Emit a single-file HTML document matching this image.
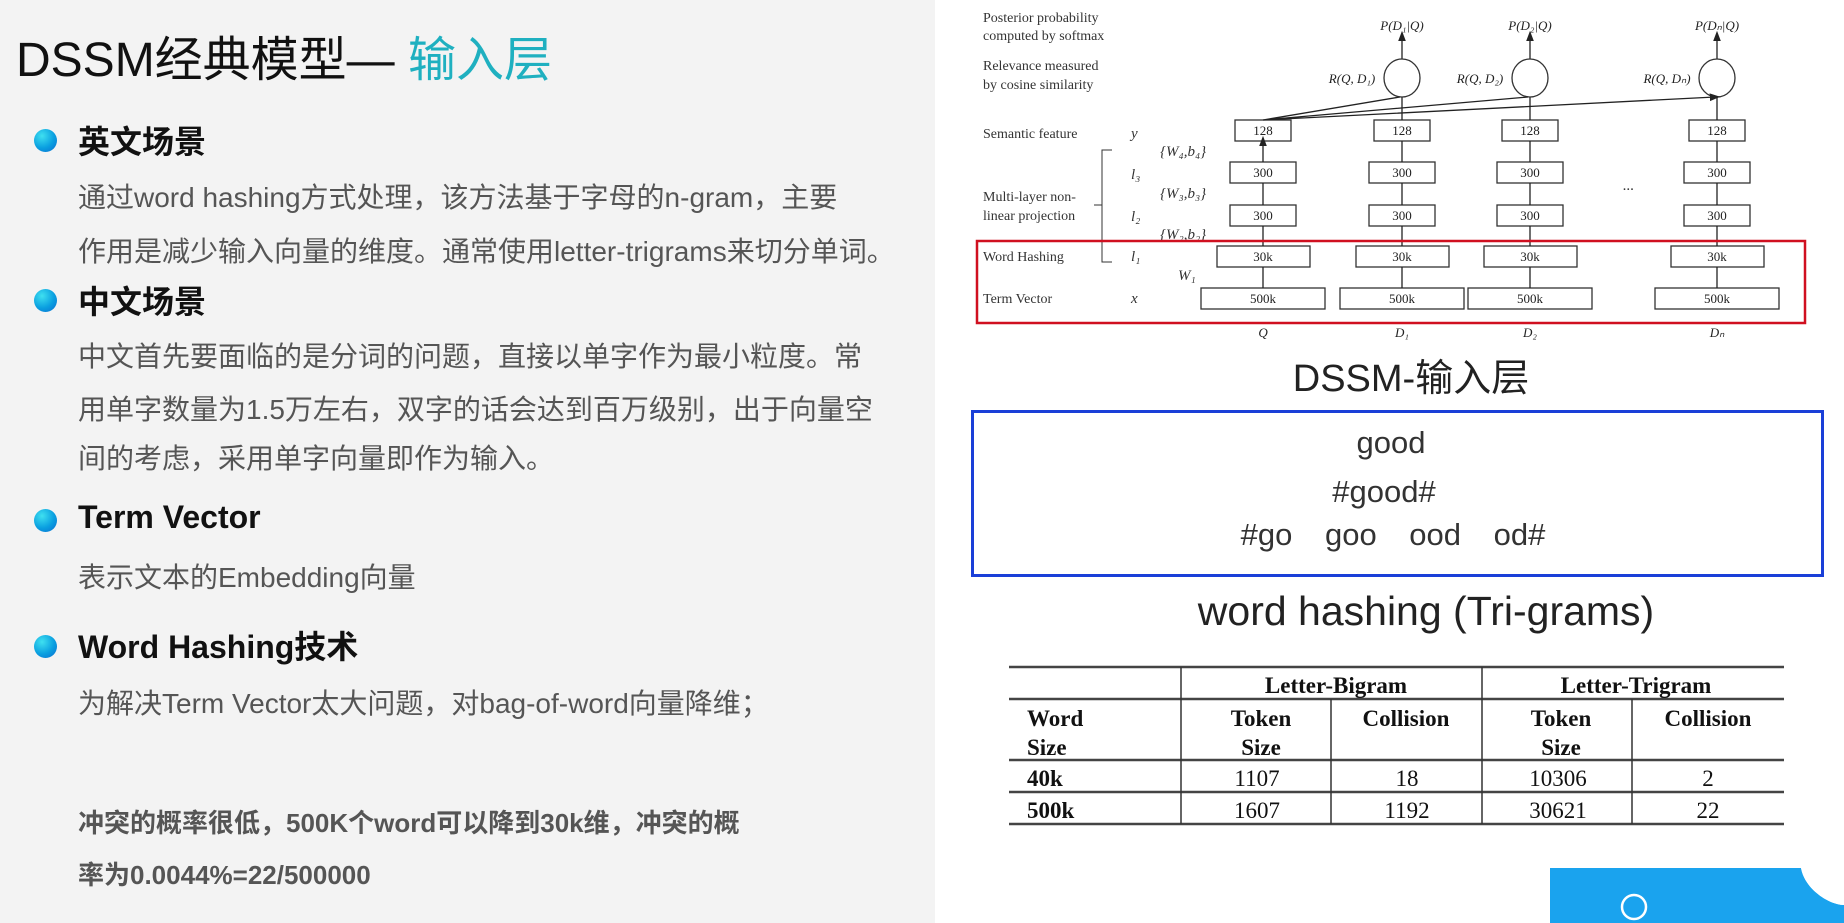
<!DOCTYPE html>
<html><head><meta charset="utf-8"><style>
*{margin:0;padding:0;box-sizing:border-box}
body{width:1844px;height:923px;background:#fff;position:relative;overflow:hidden;font-family:"Liberation Sans","Noto Sans CJK SC",sans-serif}
#left{position:absolute;left:0;top:0;width:935px;height:923px;background:#f3f3f3}
.t{position:absolute;white-space:nowrap}
.title{left:16px;top:20px;font-size:48px;color:#111}
.title span{color:#1fb0c0}
.dot{position:absolute;left:34px;width:23px;height:23px;border-radius:50%;background:radial-gradient(circle at 35% 30%,#3fe0f0,#0a9fe0 55%,#0a6bd0)}
.h{left:78px;font-size:32px;font-weight:bold;color:#111}
.b{left:78px;font-size:28px;color:#555}
.bb{left:78px;font-size:26px;font-weight:bold;color:#555}
</style></head><body>
<div id="left"></div>
<div class="t title">DSSM经典模型— <span>输入层</span></div>
<div class="dot" style="top:129px"></div><div class="t h" style="top:117px">英文场景</div>
<div class="t b" style="top:176px">通过word hashing方式处理，该方法基于字母的n-gram，主要</div>
<div class="t b" style="top:230px">作用是减少输入向量的维度。通常使用letter-trigrams来切分单词。</div>
<div class="dot" style="top:289px"></div><div class="t h" style="top:277px">中文场景</div>
<div class="t b" style="top:335px">中文首先要面临的是分词的问题，直接以单字作为最小粒度。常</div>
<div class="t b" style="top:388px">用单字数量为1.5万左右，双字的话会达到百万级别，出于向量空</div>
<div class="t b" style="top:437px">间的考虑，采用单字向量即作为输入。</div>
<div class="dot" style="top:509px"></div><div class="t h" style="top:499px">Term Vector</div>
<div class="t b" style="top:556px">表示文本的Embedding向量</div>
<div class="dot" style="top:635px"></div><div class="t h" style="top:622px">Word Hashing技术</div>
<div class="t b" style="top:682px">为解决Term Vector太大问题，对bag-of-word向量降维；</div>
<div class="t bb" style="top:803px">冲突的概率很低，500K个word可以降到30k维，冲突的概</div>
<div class="t bb" style="top:855px">率为0.0044%=22/500000</div>

<svg style="position:absolute;left:0;top:0" width="1844" height="923" font-family="Liberation Serif,serif" font-size="14" fill="#222">
<defs><marker id="a" markerWidth="8" markerHeight="8" refX="4" refY="4" orient="auto"><path d="M0,1 L8,4 L0,7z" fill="#222"/></marker></defs>
<g fill="#333">
<text x="983" y="22">Posterior probability</text><text x="983" y="40">computed by softmax</text>
<text x="983" y="70">Relevance measured</text><text x="983" y="89">by cosine similarity</text>
<text x="983" y="138">Semantic feature</text>
<text x="983" y="201">Multi-layer non-</text><text x="983" y="220">linear projection</text>
<text x="983" y="261">Word Hashing</text><text x="983" y="303">Term Vector</text>
<g font-style="italic" font-size="15"><text x="1131" y="138">y</text><text x="1131" y="179">l₃</text><text x="1131" y="221">l₂</text><text x="1131" y="261">l₁</text><text x="1131" y="303">x</text>
<text x="1160" y="156">{W₄,b₄}</text><text x="1160" y="198">{W₃,b₃}</text><text x="1160" y="239">{W₂,b₂}</text><text x="1178" y="280">W₁</text>
<text x="1623" y="190">...</text></g>
</g>
<path d="M1112,150 H1102 V262 H1112 M1102,205 H1094" fill="none" stroke="#333"/>
<g font-size="13" text-anchor="middle" stroke-width="1.3">
<g transform="translate(1263,0)">
<rect x="-28" y="120" width="56" height="21" fill="#fff" stroke="#333"/><text y="135">128</text>
<rect x="-33" y="162" width="66" height="21" fill="#fff" stroke="#333"/><text y="177">300</text>
<rect x="-33" y="205" width="66" height="21" fill="#fff" stroke="#333"/><text y="220">300</text>
<rect x="-46" y="246" width="93" height="21" fill="#fff" stroke="#333"/><text y="261">30k</text>
<rect x="-62" y="288" width="124" height="21" fill="#fff" stroke="#333"/><text y="303">500k</text>
<path d="M0,288V267M0,246V226M0,205V183M0,162V141" stroke="#222" marker-end="url(#a)"/>
<text y="337" font-style="italic">Q</text></g>
<g transform="translate(1402,0)">
<rect x="-28" y="120" width="56" height="21" fill="#fff" stroke="#333"/><text y="135">128</text>
<rect x="-33" y="162" width="66" height="21" fill="#fff" stroke="#333"/><text y="177">300</text>
<rect x="-33" y="205" width="66" height="21" fill="#fff" stroke="#333"/><text y="220">300</text>
<rect x="-46" y="246" width="93" height="21" fill="#fff" stroke="#333"/><text y="261">30k</text>
<rect x="-62" y="288" width="124" height="21" fill="#fff" stroke="#333"/><text y="303">500k</text>
<path d="M0,288V267M0,246V226M0,205V183M0,162V141M0,120V97M0,59V36" stroke="#222" marker-end="url(#a)"/>
<ellipse cx="0" cy="78" rx="18" ry="19" fill="#fff" stroke="#333"/>
<text x="-50" y="83" font-style="italic">R(Q, D₁)</text><text y="30" font-style="italic">P(D₁|Q)</text>
<text y="337" font-style="italic">D₁</text></g>
<g transform="translate(1530,0)">
<rect x="-28" y="120" width="56" height="21" fill="#fff" stroke="#333"/><text y="135">128</text>
<rect x="-33" y="162" width="66" height="21" fill="#fff" stroke="#333"/><text y="177">300</text>
<rect x="-33" y="205" width="66" height="21" fill="#fff" stroke="#333"/><text y="220">300</text>
<rect x="-46" y="246" width="93" height="21" fill="#fff" stroke="#333"/><text y="261">30k</text>
<rect x="-62" y="288" width="124" height="21" fill="#fff" stroke="#333"/><text y="303">500k</text>
<path d="M0,288V267M0,246V226M0,205V183M0,162V141M0,120V97M0,59V36" stroke="#222" marker-end="url(#a)"/>
<ellipse cx="0" cy="78" rx="18" ry="19" fill="#fff" stroke="#333"/>
<text x="-50" y="83" font-style="italic">R(Q, D₂)</text><text y="30" font-style="italic">P(D₂|Q)</text>
<text y="337" font-style="italic">D₂</text></g>
<g transform="translate(1717,0)">
<rect x="-28" y="120" width="56" height="21" fill="#fff" stroke="#333"/><text y="135">128</text>
<rect x="-33" y="162" width="66" height="21" fill="#fff" stroke="#333"/><text y="177">300</text>
<rect x="-33" y="205" width="66" height="21" fill="#fff" stroke="#333"/><text y="220">300</text>
<rect x="-46" y="246" width="93" height="21" fill="#fff" stroke="#333"/><text y="261">30k</text>
<rect x="-62" y="288" width="124" height="21" fill="#fff" stroke="#333"/><text y="303">500k</text>
<path d="M0,288V267M0,246V226M0,205V183M0,162V141M0,120V97M0,59V36" stroke="#222" marker-end="url(#a)"/>
<ellipse cx="0" cy="78" rx="18" ry="19" fill="#fff" stroke="#333"/>
<text x="-50" y="83" font-style="italic">R(Q, Dₙ)</text><text y="30" font-style="italic">P(Dₙ|Q)</text>
<text y="337" font-style="italic">Dₙ</text></g>
<path d="M1263,120L1400,97M1263,120L1528,97M1263,120L1715,97" stroke="#222" marker-end="url(#a)"/>
</g>
<rect x="977" y="241" width="828" height="82" fill="none" stroke="#d01020" stroke-width="2.5"/>
</svg>

<div class="t" style="left:1411px;top:347px;transform:translateX(-50%);font-size:38px;color:#222">DSSM-输入层</div>
<div style="position:absolute;left:971px;top:410px;width:853px;height:167px;border:3px solid #1a3fd8"></div>
<div class="t" style="left:1391px;top:425px;transform:translateX(-50%);font-size:31px;color:#333">good</div>
<div class="t" style="left:1384px;top:474px;transform:translateX(-50%);font-size:31px;color:#333">#good#</div>
<div class="t" style="left:1393px;top:517px;transform:translateX(-50%);font-size:31px;color:#333;word-spacing:24px">#go goo ood od#</div>
<div class="t" style="left:1426px;top:588px;transform:translateX(-50%);font-size:41px;color:#222">word hashing (Tri-grams)</div>

<svg style="position:absolute;left:0;top:0" width="1844" height="923" font-family="Liberation Serif,serif" font-size="23" fill="#111">
<g stroke="#444" stroke-width="2.5"><path d="M1009,667H1784M1009,699H1784M1009,760H1784M1009,792H1784M1009,824H1784"/></g>
<g stroke="#333" stroke-width="1.5"><path d="M1181,667V824M1482,667V824M1331,699V824M1632,699V824"/></g>
<g font-weight="bold" text-anchor="middle"><text x="1336" y="693">Letter-Bigram</text><text x="1636" y="693">Letter-Trigram</text>
<text x="1261" y="726">Token</text><text x="1261" y="755">Size</text><text x="1406" y="726">Collision</text>
<text x="1561" y="726">Token</text><text x="1561" y="755">Size</text><text x="1708" y="726">Collision</text></g>
<g font-weight="bold"><text x="1027" y="726">Word</text><text x="1027" y="755">Size</text><text x="1027" y="786">40k</text><text x="1027" y="818">500k</text></g>
<g text-anchor="middle"><text x="1257" y="786">1107</text><text x="1407" y="786">18</text><text x="1558" y="786">10306</text><text x="1708" y="786">2</text>
<text x="1257" y="818">1607</text><text x="1407" y="818">1192</text><text x="1558" y="818">30621</text><text x="1708" y="818">22</text></g>
<path d="M1550,868H1801C1805,890 1830,905 1844,905V923H1550Z" fill="#1aa3ee"/>
<path d="M1801,868C1805,890 1830,905 1844,905V868Z" fill="#fff"/>
<circle cx="1634" cy="907" r="12" fill="none" stroke="#fff" stroke-width="2.5"/>
</svg>
</body></html>
